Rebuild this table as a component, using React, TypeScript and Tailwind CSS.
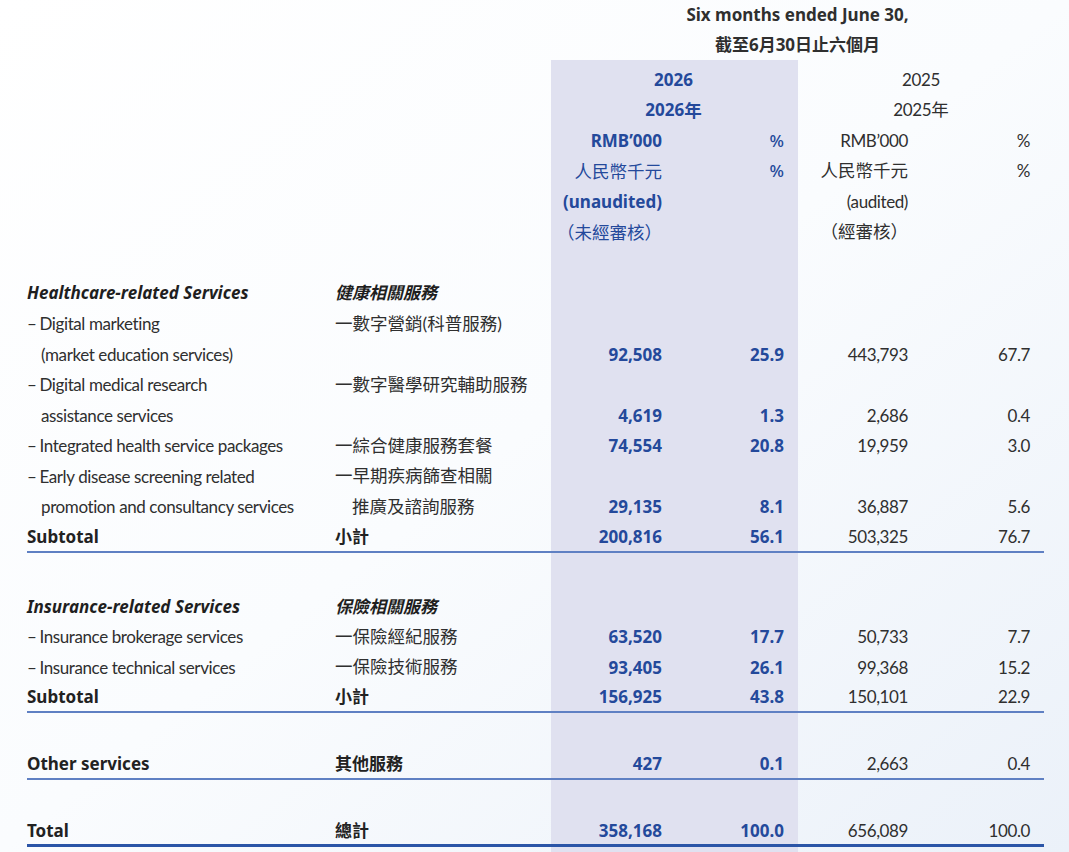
import React from 'react';

const blue = 'text-[#24499b]';
const dark = 'text-[#2f2f2f]';
const shade = 'bg-[#e0e1f0]';
const bf = "font-['Noto_Sans','Noto_Sans_CJK_TC',sans-serif] text-[17px] font-bold tracking-normal";
const zhf = 'text-[17.5px] tracking-normal';

type Cells = {
  en?: React.ReactNode;
  zh?: React.ReactNode;
  a?: React.ReactNode;
  b?: React.ReactNode;
  c?: React.ReactNode;
  d?: React.ReactNode;
  line?: 'thin' | 'thick';
  bold?: boolean;
};

const Row = ({ en, zh, a, b, c, d, line, bold }: Cells) => {
  const border =
    line === 'thin'
      ? 'border-b-2 border-[#5f80c3]'
      : line === 'thick'
        ? 'border-b-[3px] border-[#2b55a7]'
        : '';
  const cell = `h-[30.57px] flex items-center whitespace-nowrap ${border}`;
  return (
    <>
      <div className={`${cell} ${dark} ${bold ? `${bf} text-[#222]` : ''}`}>{en}</div>
      <div className={`${cell} ${dark} ${bold ? `${bf} text-[#222]` : ''} ${zhf}`}>{zh}</div>
      <div className={`${cell} ${shade} ${blue} justify-end pr-[10px] ${bf}`}>{a}</div>
      <div className={`${cell} ${shade} ${blue} justify-end pr-[14px] ${bf}`}>{b}</div>
      <div className={`${cell} ${dark} justify-end pr-[10px]`}>{c}</div>
      <div className={`${cell} ${dark} justify-end pr-[14px]`}>{d}</div>
    </>
  );
};

const Spacer = ({ h }: { h: string }) => (
  <>
    <div className={h}></div>
    <div className={h}></div>
    <div className={`${h} ${shade} col-span-2`}></div>
    <div className={`${h} col-span-2`}></div>
  </>
);

const Item = ({ children }: { children: React.ReactNode }) => (
  <span>
    –<span className="ml-[3px]">{children}</span>
  </span>
);

const Cont = ({ children }: { children: React.ReactNode }) => (
  <span className="pl-[14px]">{children}</span>
);

const Heading = ({ children }: { children: React.ReactNode }) => (
  <span className={`${bf} text-[16px] italic text-[#1f1f1f]`}>{children}</span>
);

const ZhHeading = ({ children }: { children: React.ReactNode }) => (
  <span className={`${bf} ${zhf} italic text-[#1f1f1f]`}>{children}</span>
);

export default function App() {
  return (
    <div
      className="w-[1069px] h-[852px] overflow-hidden bg-gradient-to-br from-white via-[#fafcfe] to-[#ebf1f9] pl-[27px] text-[17px] tracking-[-0.4px]"
      style={{ fontFamily: "Lato, 'Noto Sans CJK TC', sans-serif" }}
    >
      <div className="grid grid-cols-[308px_216px_121px_126px_120px_126px]">
        {/* period heading */}
        <div className="col-span-2 h-[29px]"></div>
        <div className={`col-span-4 h-[29px] flex items-center justify-center ${bf} ${dark}`}>
          Six months ended June 30,
        </div>
        <div className="col-span-2 h-[31px]"></div>
        <div className={`col-span-4 h-[31px] flex items-center justify-center ${bf} ${zhf} ${dark}`}>
          截至6月30日止六個月
        </div>

        <Spacer h="h-[4px]" />

        {/* year headings */}
        <div className="col-span-2 h-[30.57px]"></div>
        <div className={`col-span-2 h-[30.57px] ${shade} ${blue} flex items-center justify-center ${bf} pr-[2px]`}>
          2026
        </div>
        <div className={`col-span-2 h-[30.57px] ${dark} flex items-center justify-center`}>2025</div>
        <div className="col-span-2 h-[30.57px]"></div>
        <div className={`col-span-2 h-[30.57px] ${shade} ${blue} flex items-center justify-center ${bf} pr-[2px]`}>
          2026<span className={zhf}>年</span>
        </div>
        <div className={`col-span-2 h-[30.57px] ${dark} flex items-center justify-center`}>
          2025<span className={zhf}>年</span>
        </div>

        <Row a="RMB’000" b={<span className="font-medium">%</span>} c="RMB’000" d="%" />
        <Row
          a={<span className={`font-normal ${zhf}`}>人民幣千元</span>}
          b={<span className="font-medium">%</span>}
          c={<span className={zhf}>人民幣千元</span>}
          d="%"
        />
        <Row a="(unaudited)" c="(audited)" />
        <Row a={<span className={`font-normal ${zhf}`}>（未經審核）</span>} c={<span className={zhf}>（經審核）</span>} />
        <Row />

        {/* healthcare */}
        <Row en={<Heading>Healthcare-related Services</Heading>} zh={<ZhHeading>健康相關服務</ZhHeading>} />
        <Row en={<Item>Digital marketing</Item>} zh="一數字營銷(科普服務)" />
        <Row en={<Cont>(market education services)</Cont>} a="92,508" b="25.9" c="443,793" d="67.7" />
        <Row en={<Item>Digital medical research</Item>} zh="一數字醫學研究輔助服務" />
        <Row en={<Cont>assistance services</Cont>} a="4,619" b="1.3" c="2,686" d="0.4" />
        <Row
          en={<Item>Integrated health service packages</Item>}
          zh="一綜合健康服務套餐"
          a="74,554"
          b="20.8"
          c="19,959"
          d="3.0"
        />
        <Row en={<Item>Early disease screening related</Item>} zh="一早期疾病篩查相關" />
        <Row
          en={<Cont>promotion and consultancy services</Cont>}
          zh={<span className="pl-[17px]">推廣及諮詢服務</span>}
          a="29,135"
          b="8.1"
          c="36,887"
          d="5.6"
        />
        <Row en="Subtotal" zh="小計" a="200,816" b="56.1" c="503,325" d="76.7" bold line="thin" />

        <Spacer h="h-[38px]" />

        {/* insurance */}
        <Row en={<Heading>Insurance-related Services</Heading>} zh={<ZhHeading>保險相關服務</ZhHeading>} />
        <Row en={<Item>Insurance brokerage services</Item>} zh="一保險經紀服務" a="63,520" b="17.7" c="50,733" d="7.7" />
        <Row en={<Item>Insurance technical services</Item>} zh="一保險技術服務" a="93,405" b="26.1" c="99,368" d="15.2" />
        <Row en="Subtotal" zh="小計" a="156,925" b="43.8" c="150,101" d="22.9" bold line="thin" />

        <Spacer h="h-[36px]" />

        <Row en="Other services" zh="其他服務" a="427" b="0.1" c="2,663" d="0.4" bold line="thin" />

        <Spacer h="h-[37px]" />

        <Row en="Total" zh="總計" a="358,168" b="100.0" c="656,089" d="100.0" bold line="thick" />
        <Spacer h="h-[10px]" />
      </div>
    </div>
  );
}
